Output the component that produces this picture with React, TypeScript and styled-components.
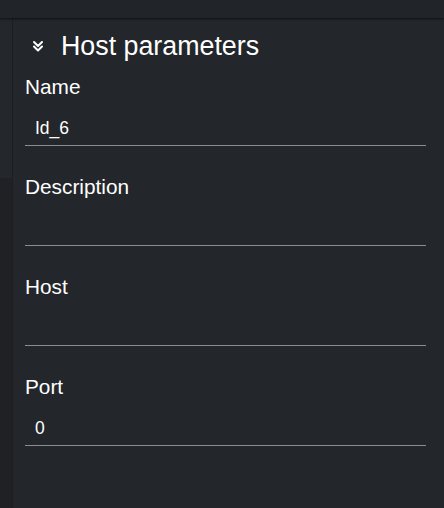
import React from "react";
import styled, { createGlobalStyle } from "styled-components";

const Global = createGlobalStyle`
  html, body { margin: 0; padding: 0; background: #23262b; }
  body { font-family: "Liberation Sans", Arial, sans-serif; color: #ffffff; }
`;

const Page = styled.div`
  width: 444px;
  height: 508px;
  display: flex;
  flex-direction: column;
  background: #23262b;
  overflow: hidden;
`;

const TopBar = styled.div`
  height: 18px;
  flex: none;
  background: #212428;
  box-shadow: 0 1px 2px rgba(0, 0, 0, 0.6);
  position: relative;
  z-index: 1;
`;

const Body = styled.div`
  flex: 1;
  display: flex;
`;

const SideStrip = styled.div`
  width: 12px;
  flex: none;
  display: flex;
  flex-direction: column;
  border-right: 1px solid #1c1e22;
`;

const StripPart = styled.div<{ $tone: string; $h?: number }>`
  background: ${(p) => p.$tone};
  ${(p) => (p.$h ? `height: ${p.$h}px; flex: none;` : "flex: 1;")}
`;

const Panel = styled.div`
  flex: 1;
  padding: 10px 18px 0 12px;
  display: flex;
  flex-direction: column;
`;

const Header = styled.div`
  display: flex;
  align-items: center;
  height: 36px;
  padding-left: 7px;
  gap: 17px;
`;

const Title = styled.h2`
  margin: 0;
  font-size: 26.8px;
  font-weight: 400;
  line-height: 36px;
`;

const Field = styled.div`
  display: flex;
  flex-direction: column;
  height: 100px;
`;

const Label = styled.label`
  font-size: 20.8px;
  line-height: 24px;
  padding-top: 11px;
`;

const Input = styled.div`
  height: 47px;
  padding: 13px 10px 0;
  display: flex;
  align-items: center;
  font-size: 17.5px;
  border-bottom: 1px solid #8a8d92;
  box-sizing: border-box;
`;

const ChevronIcon = () => (
  <svg width="12" height="12" viewBox="0 0 12 12" fill="none">
    <path d="M2 2 L6 6 L10 2" stroke="#fff" strokeWidth="2" strokeLinecap="round" strokeLinejoin="round" />
    <path d="M2 6.5 L6 10.5 L10 6.5" stroke="#fff" strokeWidth="2" strokeLinecap="round" strokeLinejoin="round" />
  </svg>
);

const fields = [
  { label: "Name", value: "Id_6" },
  { label: "Description", value: "" },
  { label: "Host", value: "" },
  { label: "Port", value: "0" },
];

export default function App() {
  return (
    <>
      <Global />
      <Page>
        <TopBar />
        <Body>
          <SideStrip>
            <StripPart $tone="#24272b" $h={160} />
            <StripPart $tone="#1f2125" />
          </SideStrip>
          <Panel>
            <Header>
              <ChevronIcon />
              <Title>Host parameters</Title>
            </Header>
            {fields.map((f) => (
              <Field key={f.label}>
                <Label>{f.label}</Label>
                <Input>{f.value}</Input>
              </Field>
            ))}
          </Panel>
        </Body>
      </Page>
    </>
  );
}
